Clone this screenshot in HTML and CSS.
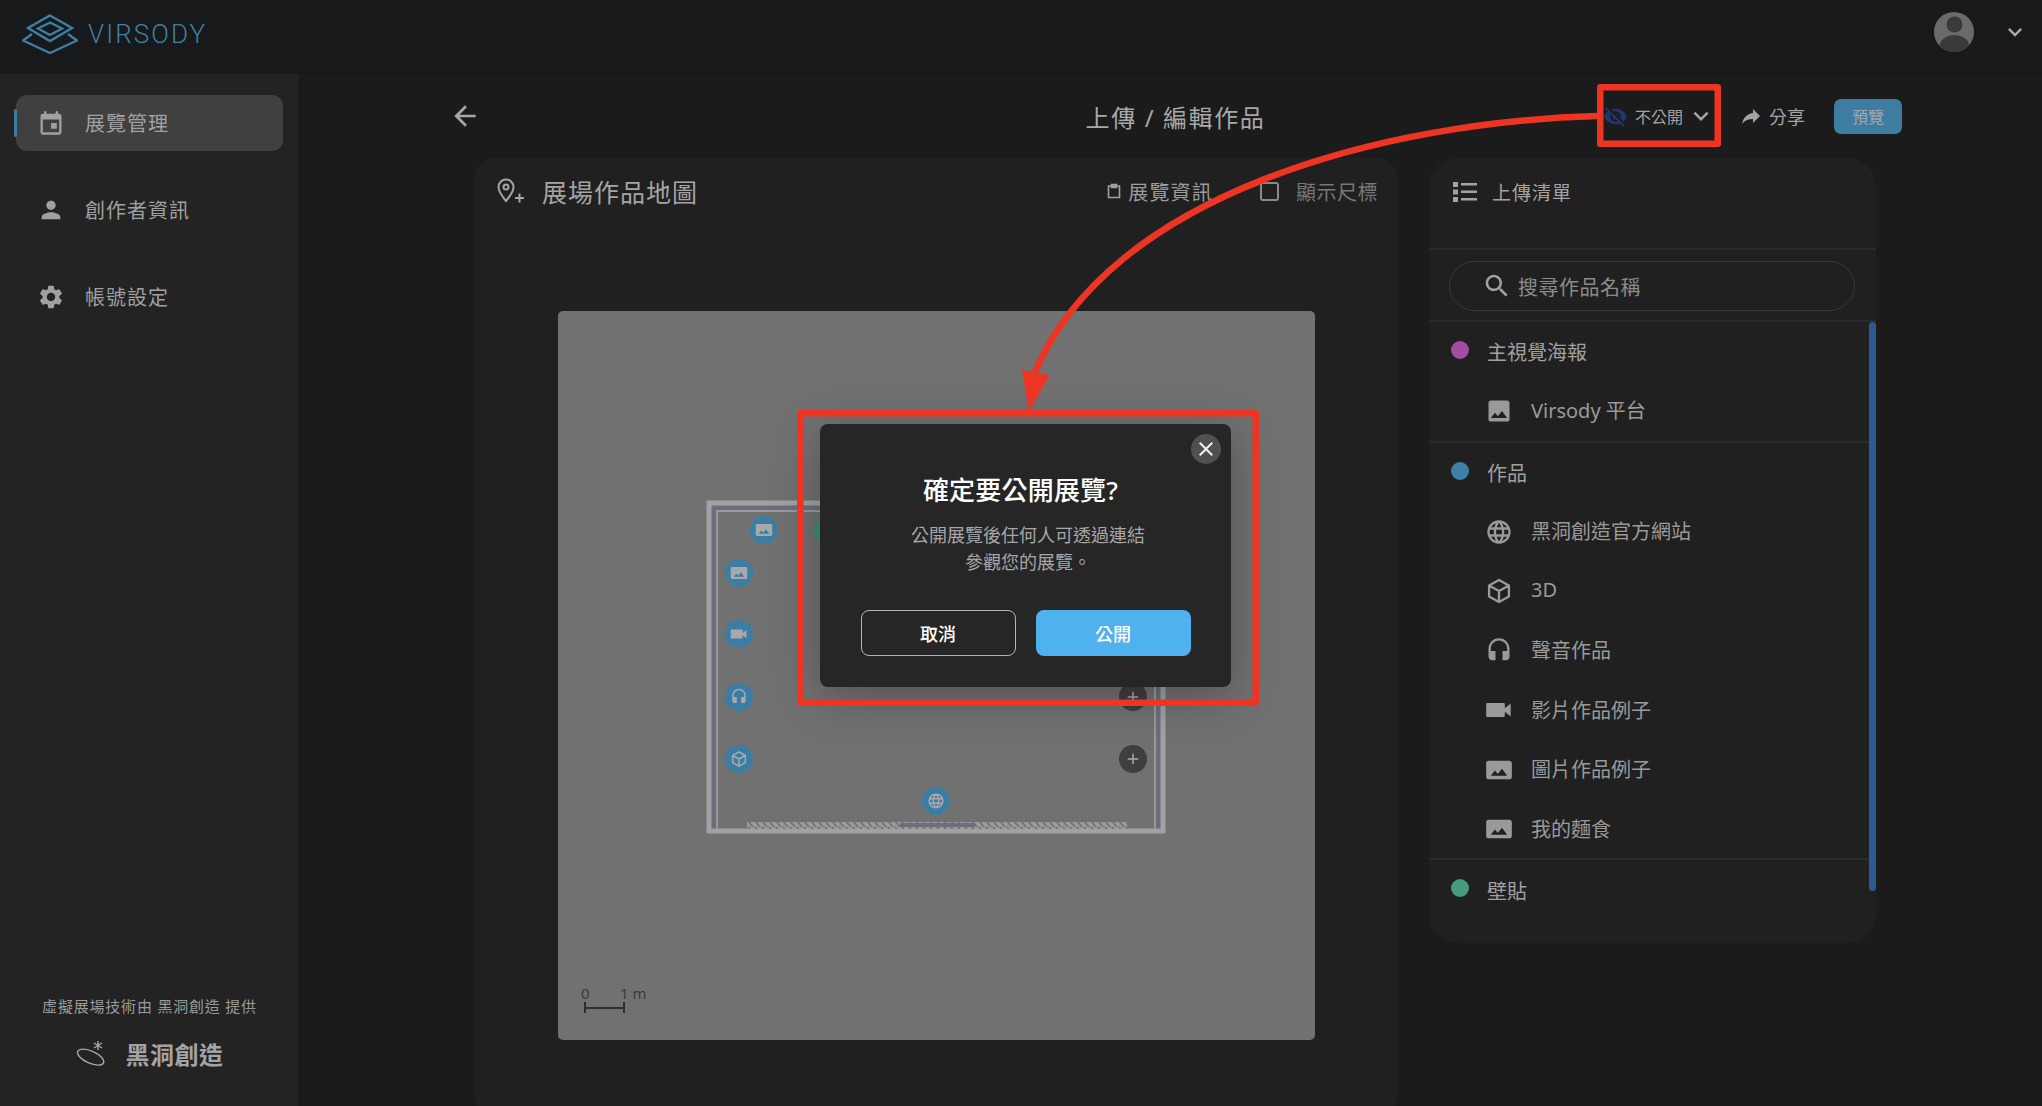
FILE: index.html
```html
<!DOCTYPE html>
<html lang="zh-Hant">
<head>
    <meta charset="UTF-8">
    <title>上傳 / 編輯作品</title>
    <link rel="stylesheet" href="styles.css">
</head>
<body>
    <svg class="sprite" width="0" height="0">
        <symbol id="i-event" viewBox="0 0 24 24"><path d="M17 12h-5v5h5v-5zM19 4h-1V2h-2v2H8V2H6v2H5c-1.1 0-2 .9-2 2v14c0 1.1.9 2 2 2h14c1.1 0 2-.9 2-2V6c0-1.1-.9-2-2-2zm0 16H5V9h14v11z"/></symbol>
        <symbol id="i-person" viewBox="0 0 24 24"><path d="M12 12c2.21 0 4-1.79 4-4s-1.79-4-4-4-4 1.79-4 4 1.79 4 4 4zm0 2c-2.67 0-8 1.34-8 4v2h16v-2c0-2.66-5.33-4-8-4z"/></symbol>
        <symbol id="i-gear" viewBox="0 0 24 24"><path d="M19.14 12.94c.04-.3.06-.61.06-.94 0-.32-.02-.64-.07-.94l2.03-1.58c.18-.14.23-.41.12-.61l-1.92-3.32c-.12-.22-.37-.29-.59-.22l-2.39.96c-.5-.38-1.03-.7-1.62-.94l-.36-2.54c-.04-.24-.24-.41-.48-.41h-3.84c-.24 0-.43.17-.47.41l-.36 2.54c-.59.24-1.13.57-1.62.94l-2.39-.96c-.22-.08-.47 0-.59.22L2.74 8.87c-.12.21-.08.47.12.61l2.03 1.58c-.05.3-.09.63-.09.94s.02.64.07.94l-2.03 1.58c-.18.14-.23.41-.12.61l1.92 3.32c.12.22.37.29.59.22l2.39-.96c.5.38 1.03.7 1.62.94l.36 2.54c.05.24.24.41.48.41h3.84c.24 0 .44-.17.47-.41l.36-2.54c.59-.24 1.13-.56 1.62-.94l2.39.96c.22.08.47 0 .59-.22l1.92-3.32c.12-.22.07-.47-.12-.61l-2.01-1.58zM12 15.6c-1.98 0-3.6-1.62-3.6-3.6s1.62-3.6 3.6-3.6 3.6 1.62 3.6 3.6-1.62 3.6-3.6 3.6z"/></symbol>
        <symbol id="i-back" viewBox="0 0 24 24"><path d="M20 11H7.83l5.59-5.59L12 4l-8 8 8 8 1.41-1.41L7.83 13H20v-2z"/></symbol>
        <symbol id="i-eyeoff" viewBox="0 0 24 24"><path d="M12 7c2.76 0 5 2.24 5 5 0 .65-.13 1.26-.36 1.83l2.92 2.92c1.51-1.26 2.7-2.89 3.43-4.75-1.73-4.39-6-7.5-11-7.5-1.4 0-2.74.25-3.98.7l2.16 2.16C10.74 7.13 11.35 7 12 7zM2 4.27l2.28 2.28.46.46C3.08 8.3 1.78 10.02 1 12c1.73 4.39 6 7.5 11 7.5 1.55 0 3.03-.3 4.38-.84l.42.42L19.73 22 21 20.73 3.27 3 2 4.27zM7.53 9.8l1.55 1.55c-.05.21-.08.43-.08.65 0 1.66 1.34 3 3 3 .22 0 .44-.03.65-.08l1.55 1.55c-.67.33-1.41.53-2.2.53-2.76 0-5-2.24-5-5 0-.79.2-1.53.53-2.2zm4.31-.78l3.15 3.15.02-.16c0-1.66-1.34-3-3-3l-.17.01z"/></symbol>
        <symbol id="i-share" viewBox="0 0 24 24"><path d="M14 9V5l7 7-7 7v-4.1c-5 0-8.5 1.6-11 5.1 1-5 4-10 11-11z"/></symbol>
        <symbol id="i-chevron" viewBox="0 0 24 24"><path d="M16.59 8.59L12 13.17 7.41 8.59 6 10l6 6 6-6z"/></symbol>
        <symbol id="i-list" viewBox="0 0 24 20"><path d="M0 0h5v5H0zM0 7.5h5v5H0zM0 15h5v5H0zM8 1h16v2.5H8zM8 8.5h16V11H8zM8 16h16v2.5H8z"/></symbol>
        <symbol id="i-search" viewBox="0 0 24 24"><path d="M15.5 14h-.79l-.28-.27C15.41 12.59 16 11.11 16 9.5 16 5.91 13.09 3 9.5 3S3 5.91 3 9.5 5.91 16 9.5 16c1.61 0 3.09-.59 4.23-1.57l.27.28v.79l5 4.99L20.49 19l-4.99-5zm-6 0C7.01 14 5 11.99 5 9.5S7.01 5 9.5 5 14 7.01 14 9.5 11.99 14 9.5 14z"/></symbol>
        <symbol id="i-image" viewBox="0 0 24 24"><path d="M21 19V5c0-1.1-.9-2-2-2H5c-1.1 0-2 .9-2 2v14c0 1.1.9 2 2 2h14c1.1 0 2-.9 2-2zM8.5 13.5l2.5 3.01L14.5 12l4.5 6H5l3.5-4.5z"/></symbol>
        <symbol id="i-pano" viewBox="0 0 24 24"><path d="M23 18V6c0-1.1-.9-2-2-2H3c-1.1 0-2 .9-2 2v12c0 1.1.9 2 2 2h18c1.1 0 2-.9 2-2zM8.5 12.5l2.5 3.01L14.5 11l4.5 6H5l3.5-4.5z"/></symbol>
        <symbol id="i-globe" viewBox="0 0 24 24"><path d="M11.99 2C6.47 2 2 6.48 2 12s4.47 10 9.99 10C17.52 22 22 17.52 22 12S17.52 2 11.99 2zm6.93 6h-2.95c-.32-1.25-.78-2.45-1.38-3.56 1.84.63 3.37 1.91 4.33 3.56zM12 4.04c.83 1.2 1.48 2.53 1.91 3.96h-3.82c.43-1.43 1.08-2.76 1.91-3.96zM4.26 14C4.1 13.36 4 12.69 4 12s.1-1.36.26-2h3.38c-.08.66-.14 1.32-.14 2 0 .68.06 1.34.14 2H4.26zm.82 2h2.95c.32 1.25.78 2.45 1.38 3.56-1.84-.63-3.37-1.9-4.33-3.56zm2.95-8H5.08c.96-1.66 2.49-2.93 4.33-3.56C8.81 5.55 8.35 6.75 8.03 8zM12 19.96c-.83-1.2-1.48-2.53-1.91-3.96h3.82c-.43 1.43-1.08 2.76-1.91 3.96zM14.34 14H9.66c-.09-.66-.16-1.32-.16-2 0-.68.07-1.35.16-2h4.68c.09.65.16 1.32.16 2 0 .68-.07 1.34-.16 2zm.25 5.56c.6-1.11 1.06-2.31 1.38-3.56h2.95c-.96 1.65-2.49 2.93-4.33 3.56zM16.36 14c.08-.66.14-1.32.14-2 0-.68-.06-1.34-.14-2h3.38c.16.64.26 1.31.26 2s-.1 1.36-.26 2h-3.38z"/></symbol>
        <symbol id="i-box" viewBox="0 0 24 24"><path fill="none" stroke="currentColor" stroke-width="2" stroke-linejoin="round" d="M12 2.5l8.5 4.8v9.4L12 21.5l-8.5-4.8V7.3zM3.5 7.3L12 12l8.5-4.7M12 12v9.5"/></symbol>
        <symbol id="i-headset" viewBox="0 0 24 24"><path d="M12 1c-4.97 0-9 4.03-9 9v7c0 1.66 1.34 3 3 3h3v-8H5v-2c0-3.87 3.13-7 7-7s7 3.13 7 7v2h-4v8h3c1.66 0 3-1.34 3-3v-7c0-4.97-4.03-9-9-9z"/></symbol>
        <symbol id="i-video" viewBox="0 0 24 24"><path d="M17 10.5V7c0-.55-.45-1-1-1H2c-.55 0-1 .45-1 1v10c0 .55.45 1 1 1h14c.55 0 1-.45 1-1v-3.5l5 4v-11l-5 4z"/></symbol>
        <symbol id="i-close" viewBox="0 0 24 24"><path d="M19 6.41L17.59 5 12 10.59 6.41 5 5 6.41 10.59 12 5 17.59 6.41 19 12 13.41 17.59 19 19 17.59 13.41 12z"/></symbol>
        <symbol id="i-add" viewBox="0 0 24 24"><path d="M19 13h-6v6h-2v-6H5v-2h6V5h2v6h6v2z"/></symbol>
    </svg>

    <header class="topbar">
        <div class="brand">
            <svg class="brand-mark" viewBox="0 0 56 40" fill="none" stroke="#3e7fa6" stroke-width="2.4">
                <path d="M28 1.5L50 14 28 27 6 14z"/>
                <path d="M28 8.5L40 14.5 28 21 16 14.5z"/>
                <path d="M10 20L1 26.5 28 39 55 26.5 46 20"/>
            </svg>
            <span class="brand-name">VIRSODY</span>
        </div>
        <div class="account">
            <svg class="avatar" viewBox="0 0 40 40">
                <defs><clipPath id="avatar-clip"><circle cx="20" cy="20" r="20"/></clipPath></defs>
                <circle cx="20" cy="20" r="20" fill="#6a6a6a"/>
                <g clip-path="url(#avatar-clip)" fill="#3a3a3a">
                    <circle cx="20.5" cy="12.5" r="8"/>
                    <ellipse cx="20.5" cy="35" rx="15" ry="12"/>
                </g>
            </svg>
            <svg class="icon account-arrow"><use href="#i-chevron"/></svg>
        </div>
    </header>

    <div class="layout">
        <aside class="sidebar">
            <nav class="menu">
                <a class="menu-item on"><svg class="icon"><use href="#i-event"/></svg>展覽管理</a>
                <a class="menu-item"><svg class="icon"><use href="#i-person"/></svg>創作者資訊</a>
                <a class="menu-item"><svg class="icon"><use href="#i-gear"/></svg>帳號設定</a>
            </nav>
            <div class="credit">
                <p class="credit-line">虛擬展場技術由 黑洞創造 提供</p>
                <div class="credit-logo">
                    <svg class="credit-mark" viewBox="0 0 30 28" fill="none" stroke="#a8a8a8">
                        <ellipse cx="15" cy="18.5" rx="15" ry="6.5" transform="rotate(24 15 18.5) scale(.94)" stroke-width="1.5"/>
                        <path d="M22 1v9M18 3l8 5M26 3l-8 5" stroke-width="1.4"/>
                    </svg>
                    <span>黑洞創造</span>
                </div>
            </div>
        </aside>

        <main class="main">
            <div class="toolbar">
                <svg class="icon back"><use href="#i-back"/></svg>
                <h1 class="page-title">上傳 / 編輯作品</h1>
                <div class="actions">
                    <div class="privacy">
                        <svg class="icon eye"><use href="#i-eyeoff"/></svg>
                        <span>不公開</span>
                        <svg class="icon caret"><use href="#i-chevron"/></svg>
                    </div>
                    <div class="share"><svg class="icon"><use href="#i-share"/></svg>分享</div>
                    <button class="preview">預覽</button>
                </div>
            </div>

            <div class="content">
                <section class="map-panel">
                    <div class="map-head">
                        <svg class="pin" viewBox="0 0 28 26" fill="none" stroke="#a5a5a5" stroke-width="2">
                            <path d="M9 1.5c-4.2 0-7.5 3.3-7.5 7.5 0 5 7.5 14 7.5 14s7.5-9 7.5-14c0-4.2-3.3-7.5-7.5-7.5z"/>
                            <circle cx="9" cy="9" r="2.5"/>
                            <path d="M18 20h9M22.5 15.5v9"/>
                        </svg>
                        <h2 class="map-title">展場作品地圖</h2>
                        <div class="map-info">
                            <svg class="clip" viewBox="0 0 14 16" fill="none" stroke="#a0a0a0" stroke-width="1.6">
                                <path d="M4 3H1.500v11.500h11V3H10"/><path d="M4.500 1.500h5v3h-5z" fill="#a0a0a0"/>
                            </svg>
                            展覽資訊
                        </div>
                        <label class="map-ruler"><span class="check"></span>顯示尺標</label>
                    </div>
                    <div class="map">
                        <svg class="plan" viewBox="0 0 757 729">
                            <defs>
                                <pattern id="hatch" width="7" height="6" patternUnits="userSpaceOnUse">
                                    <rect width="7" height="6" fill="#9a9a9a"/>
                                    <path d="M0 0l5 6h2L2 0z" fill="#6e6e78"/>
                                </pattern>
                            </defs>
                            <path d="M155 518V196H601V518" fill="none" stroke="#6d6d7e" stroke-width="5"/>
                            <path d="M159 518V200H597V518" fill="none" stroke="#9a9a9a" stroke-width="2"/>
                            <rect x="151" y="192" width="454" height="328" fill="none" stroke="#a2a2a2" stroke-width="5"/>
                            <rect x="189" y="511" width="380" height="7" fill="url(#hatch)"/>
                            <rect x="342" y="512" width="75" height="4" fill="#6d6d7e"/>
                            <text class="plan-scale" x="23" y="688">0</text>
                            <text class="plan-scale" x="62" y="688">1 m</text>
                            <path d="M27 691v11M27 697h39M66 691v11" fill="none" stroke="#2e2e2e" stroke-width="2"/>
                        </svg>
                        <span class="node node-a"><svg class="icon"><use href="#i-pano"/></svg></span>
                        <span class="node node-green"></span>
                        <span class="node node-b"><svg class="icon"><use href="#i-pano"/></svg></span>
                        <span class="node node-c"><svg class="icon"><use href="#i-video"/></svg></span>
                        <span class="node node-d"><svg class="icon"><use href="#i-headset"/></svg></span>
                        <span class="node node-e"><svg class="icon"><use href="#i-box"/></svg></span>
                        <span class="node node-f"><svg class="icon"><use href="#i-globe"/></svg></span>
                        <span class="node add node-g"><svg class="icon"><use href="#i-add"/></svg></span>
                        <span class="node add node-h"><svg class="icon"><use href="#i-add"/></svg></span>
                    </div>
                </section>

                <section class="list-panel">
                    <div class="list-head"><svg class="icon"><use href="#i-list"/></svg>上傳清單</div>
                    <div class="search-row">
                        <div class="search"><svg class="icon"><use href="#i-search"/></svg>搜尋作品名稱</div>
                    </div>
                    <div class="groups">
                        <div class="scrollbar"></div>
                        <div class="group">
                            <div class="group-title"><i class="dot purple"></i>主視覺海報</div>
                            <div class="work"><svg class="icon"><use href="#i-image"/></svg>Virsody 平台</div>
                        </div>
                        <div class="group">
                            <div class="group-title"><i class="dot blue"></i>作品</div>
                            <div class="work"><svg class="icon"><use href="#i-globe"/></svg>黑洞創造官方網站</div>
                            <div class="work"><svg class="icon"><use href="#i-box"/></svg>3D</div>
                            <div class="work"><svg class="icon"><use href="#i-headset"/></svg>聲音作品</div>
                            <div class="work"><svg class="icon"><use href="#i-video"/></svg>影片作品例子</div>
                            <div class="work"><svg class="icon"><use href="#i-pano"/></svg>圖片作品例子</div>
                            <div class="work"><svg class="icon"><use href="#i-pano"/></svg>我的麵食</div>
                        </div>
                        <div class="group">
                            <div class="group-title"><i class="dot green"></i>壁貼</div>
                        </div>
                    </div>
                </section>
            </div>
        </main>
    </div>

    <div class="modal">
        <span class="modal-close"><svg class="icon"><use href="#i-close"/></svg></span>
        <h3 class="modal-title">確定要公開展覽?</h3>
        <p class="modal-text">公開展覽後任何人可透過連結<br>參觀您的展覽。</p>
        <div class="modal-btns">
            <button class="btn btn-line">取消</button>
            <button class="btn btn-fill">公開</button>
        </div>
    </div>

    <!-- 標註:紅框和箭頭 -->
    <svg class="marks" viewBox="0 0 2042 1106" fill="none" stroke="#ee3524" stroke-width="6.5" stroke-linejoin="round">
        <rect x="1600.25" y="87.25" width="117.5" height="56.5"/>
        <rect x="800.25" y="413.25" width="455.5" height="289.5"/>
        <path d="M1597 116C1380 122 1110 195 1035 372"/>
        <path d="M1022 370L1050 375 1029 411z" fill="#ee3524" stroke="none"/>
    </svg>
</body>
</html>
```

FILE: styles.css
```css
*{box-sizing: border-box;}
html,body{margin: 0;padding: 0;}
h1,h2,h3,p{margin: 0;font-weight: 400;}
body{
    position: relative;
    width: 2042px;
    height: 1106px;
    overflow: hidden;
    background-color: #1b1b1b;
    color: #a3a3a3;
    font-family: "Noto Sans", "Noto Sans CJK TC", sans-serif;
}
.sprite{position: absolute;}
.icon{
    display: block;
    flex: none;
    width: 24px;
    height: 24px;
    fill: currentColor;
}

/* top bar */
.topbar{
    display: flex;
    align-items: center;
    justify-content: space-between;
    height: 74px;
    padding: 0 13px 10px 22px;
    background-color: #17191a;
}
.brand{
    display: flex;
    align-items: center;
    gap: 10px;
    margin-top: 3px;
}
.brand-mark{
    display: block;
    width: 56px;
    height: 40px;
}
.brand-name{
    color: #3e7fa6;
    font-family: Roboto, sans-serif;
    font-size: 26px;
    font-weight: 300;
    letter-spacing: 2.1px;
}
.account{
    display: flex;
    align-items: center;
    gap: 27px;
}
.avatar{
    display: block;
    width: 40px;
    height: 40px;
}
.account-arrow{
    width: 28px;
    height: 28px;
    color: #a8a8a8;
}

.layout{
    display: flex;
    height: 1032px;
}

/* sidebar */
.sidebar{
    display: flex;
    flex-direction: column;
    justify-content: space-between;
    width: 298px;
    padding: 21px 15px 35px 16px;
    background-color: #232323;
}
.menu{
    display: flex;
    flex-direction: column;
    gap: 31px;
}
.menu-item{
    position: relative;
    display: flex;
    align-items: center;
    gap: 20px;
    height: 56px;
    padding: 0 0 2px 21px;
    border-radius: 11px;
    font-size: 20px;
    letter-spacing: 1px;
    color: #a0a0a0;
}
.menu-item .icon{
    width: 28px;
    height: 28px;
    margin-top: 2px;
}
.menu-item.on{
    background-color: #404040;
}
.menu-item.on::before{
    content: "";
    position: absolute;
    left: -2px;
    top: 14px;
    width: 3px;
    height: 28px;
    border-radius: 2px;
    background-color: #3b7ba3;
}
.credit{
    text-align: center;
}
.credit-line{
    font-size: 15px;
    letter-spacing: .8px;
    line-height: 20px;
    color: #9a9a9a;
}
.credit-logo{
    display: flex;
    align-items: center;
    justify-content: center;
    gap: 20px;
    margin-top: 20px;
    font-size: 24px;
    font-weight: 700;
    letter-spacing: .5px;
    color: #a3a3a3;
}
.credit-mark{
    display: block;
    width: 30px;
    height: 28px;
}

/* main */
.main{
    flex: 1;
    min-width: 0;
}
.toolbar{
    display: grid;
    grid-template-columns: 1fr auto 1fr;
    align-items: center;
    height: 84px;
    padding: 0 140px 0 151px;
}
.back{
    width: 32px;
    height: 32px;
    color: #a8a8a8;
}
.page-title{
    font-size: 24px;
    letter-spacing: 1.6px;
    color: #a8a8a8;
}
.actions{
    display: flex;
    align-items: center;
    justify-content: flex-end;
}
.privacy{
    display: flex;
    align-items: center;
    font-size: 16px;
    color: #a3a3a3;
}
.eye{
    width: 25px;
    height: 25px;
    margin-right: 7px;
    color: #22356f;
}
.caret{
    width: 30px;
    height: 30px;
    margin-left: 3px;
}
.share{
    display: flex;
    align-items: center;
    gap: 6px;
    margin: 0 29px 0 25px;
    font-size: 18px;
}
.share .icon{
    width: 24px;
    height: 24px;
    margin-left: -2px;
}
.preview{
    width: 68px;
    height: 35px;
    padding: 0;
    border: 0;
    border-radius: 7px;
    background-color: #3f7ca2;
    color: #a6a6a6;
    font-family: inherit;
    font-size: 16px;
}
.content{
    display: flex;
    gap: 32px;
    padding-left: 177px;
}

/* map panel */
.map-panel{
    width: 922px;
    height: 960px;
    border-radius: 20px;
    background-color: #202020;
}
.map-head{
    display: flex;
    align-items: center;
    height: 153px;
    padding: 0 19px 87px 22px;
}
.pin{
    display: block;
    width: 28px;
    height: 26px;
    margin-right: 17px;
}
.map-title{
    font-size: 25px;
    letter-spacing: 1px;
    color: #a5a5a5;
}
.map-info{
    display: flex;
    align-items: center;
    gap: 7px;
    margin-left: auto;
    font-size: 20px;
    letter-spacing: 1.2px;
    color: #9c9c9c;
}
.clip{
    display: block;
    width: 14px;
    height: 16px;
}
.map-ruler{
    display: flex;
    align-items: center;
    gap: 17px;
    margin-left: 47px;
    font-size: 20px;
    letter-spacing: .5px;
    color: #777;
}
.check{
    width: 19px;
    height: 19px;
    border: 2px solid #8a8a8a;
    border-radius: 3px;
}
.map{
    position: relative;
    width: 757px;
    height: 729px;
    margin-left: 83px;
    border-radius: 5px;
    background-color: #717171;
}
.plan{
    position: absolute;
    left: 0;
    top: 0;
    width: 757px;
    height: 729px;
}
.plan-scale{
    fill: #3a3a3a;
    font-family: "Noto Sans", sans-serif;
    font-size: 15px;
}
.node{
    position: absolute;
    display: flex;
    align-items: center;
    justify-content: center;
    width: 28px;
    height: 28px;
    border-radius: 50%;
    background-color: #3c7da4;
    color: #a9a9a9;
}
.node .icon{
    width: 18px;
    height: 18px;
}
.node.add{
    background-color: #3f3f3f;
}
.node-a{left: 192px;top: 205px;}
.node-green{left: 256px;top: 206px;background-color: #3f8d7c;}
.node-b{left: 167px;top: 248px;}
.node-c{left: 167px;top: 309px;}
.node-d{left: 167px;top: 372px;}
.node-e{left: 167px;top: 434px;}
.node-f{left: 364px;top: 476px;}
.node-g{left: 561px;top: 372px;}
.node-h{left: 561px;top: 434px;}

/* upload list */
.list-panel{
    width: 447px;
    height: 785px;
    border-radius: 28px;
    background-color: #202020;
    overflow: hidden;
}
.list-head{
    display: flex;
    align-items: center;
    gap: 15px;
    height: 92px;
    padding: 0 0 23px 24px;
    border-bottom: 2px solid #2a2a2a;
    font-size: 19px;
    letter-spacing: 1px;
}
.list-head .icon{
    width: 24px;
    height: 20px;
}
.search-row{
    height: 72px;
    padding: 11px 21px 0 20px;
    border-bottom: 2px solid #2a2a2a;
}
.search{
    display: flex;
    align-items: center;
    gap: 6px;
    height: 50px;
    padding-left: 32px;
    border: 1px solid #3a3a3a;
    border-radius: 25px;
    font-size: 20px;
    letter-spacing: .5px;
    color: #8c8c8c;
}
.search .icon{
    width: 30px;
    height: 30px;
    color: #a3a3a3;
}
.groups{
    position: relative;
}
.group{
    border-bottom: 2px solid #2a2a2a;
}
.group:last-child{
    border-bottom: 0;
}
.group-title{
    display: flex;
    align-items: center;
    gap: 18px;
    height: 60px;
    padding: 0 0 2px 22px;
    font-size: 20px;
    color: #a0a0a0;
}
.group:last-child .group-title{
    padding-bottom: 0;
}
.dot{
    flex: none;
    width: 18px;
    height: 18px;
    margin-top: -2px;
    border-radius: 50%;
}
.group:last-child .dot{
    margin-top: -4px;
}
.purple{background-color: #a24d9f;}
.blue{background-color: #3f80a6;}
.green{background-color: #469a80;}
.work{
    display: flex;
    align-items: center;
    gap: 18px;
    height: 59.1px;
    padding: 0 0 4px 56px;
    font-size: 20px;
    color: #9a9a9a;
}
.work + .work{
    height: 59.6px;
}
.work + .work:last-child{
    height: 57.5px;
    padding-bottom: 2px;
}
.work .icon{
    width: 28px;
    height: 28px;
    margin-top: 2px;
}
.scrollbar{
    position: absolute;
    right: 0;
    top: 0;
    width: 7px;
    height: 569px;
    border-radius: 4px;
    background-color: #2d5a91;
}

/* dialog */
.modal{
    position: absolute;
    left: 820px;
    top: 424px;
    width: 411px;
    height: 263px;
    padding-top: 47px;
    border-radius: 8px;
    background-color: #262626;
    box-shadow: 0 10px 50px rgba(0,0,0,.28);
    text-align: center;
}
.modal-close{
    position: absolute;
    right: 10px;
    top: 10px;
    display: flex;
    align-items: center;
    justify-content: center;
    width: 30px;
    height: 30px;
    border-radius: 50%;
    background-color: #505050;
    color: #f0f0f0;
}
.modal-title{
    padding-right: 10px;
    font-size: 26px;
    font-weight: 500;
    letter-spacing: .2px;
    line-height: 38px;
    color: #fff;
}
.modal-text{
    margin-top: 13px;
    padding-left: 5px;
    font-size: 18px;
    line-height: 27px;
    color: #a6a6a6;
}
.modal-btns{
    display: flex;
    justify-content: center;
    gap: 20px;
    margin-top: 34px;
}
.btn{
    width: 155px;
    height: 46px;
    padding: 0;
    border-radius: 8px;
    font-family: inherit;
    font-size: 18px;
    font-weight: 500;
    color: #fff;
}
.btn-line{
    border: 1px solid #b5b5b5;
    background-color: transparent;
}
.btn-fill{
    border: 0;
    background-color: #4fb1ee;
}

/* annotation */
.marks{
    position: absolute;
    left: 0;
    top: 0;
    width: 2042px;
    height: 1106px;
    pointer-events: none;
}
```
